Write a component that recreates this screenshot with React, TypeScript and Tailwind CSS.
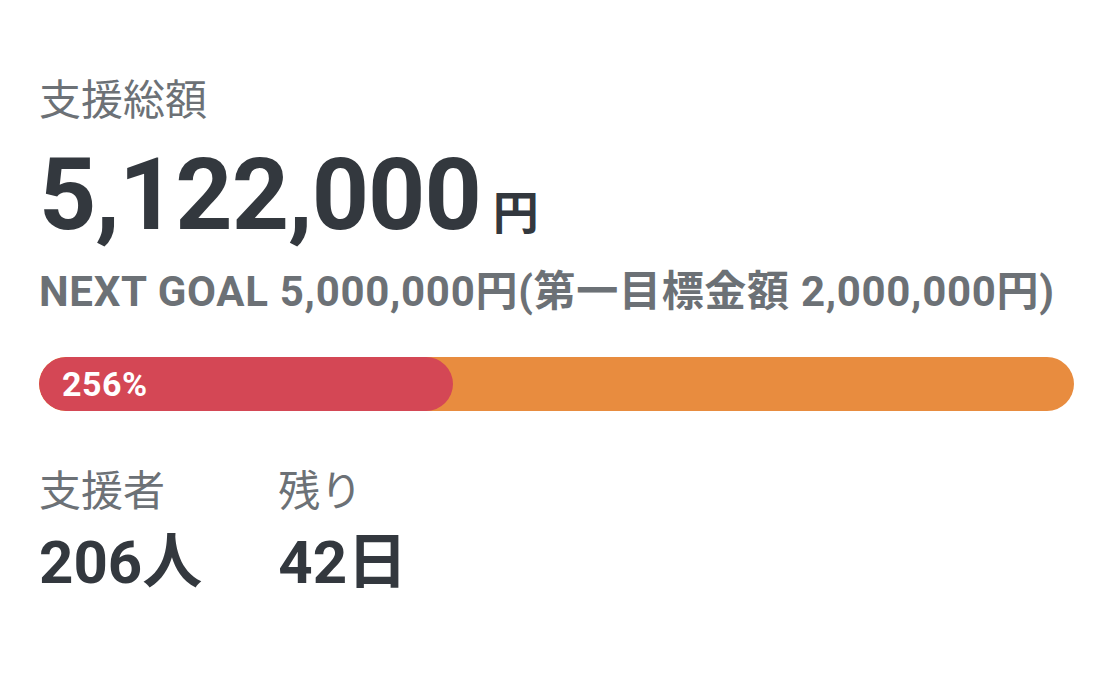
import React from "react";

const font = { fontFamily: 'Roboto, "Noto Sans CJK JP", sans-serif' };

export default function App() {
  return (
    <div className="w-[1103px] h-[675px] bg-white overflow-hidden" style={font}>
      <div className="pl-[39px] pr-[30px] pt-[80px] flex flex-col">
        <div className="text-[42px] leading-none text-[#6c7176]">支援総額</div>
        <div className="mt-[23px] flex items-baseline text-[#33383e]">
          <span className="text-[100px] leading-none font-bold tracking-[-1px]">5,122,000</span>
          <span className="ml-[12px] text-[46px] leading-none font-bold">円</span>
        </div>
        <div className="mt-[26px] text-[42px] leading-none font-bold text-[#6c7176] whitespace-nowrap tracking-[0.7px]">
          NEXT GOAL 5,000,000円(第一目標金額 2,000,000円)
        </div>
        <div className="mt-[44px] w-[1035px] h-[54px] rounded-full bg-[#e88c3f] flex overflow-hidden">
          <div className="w-[40%] h-full rounded-full bg-[#d44755] flex items-center pl-[23px]">
            <span className="text-[34px] font-bold text-white leading-none tracking-[0.5px]">256%</span>
          </div>
        </div>
        <div className="mt-[60px] flex gap-[76px]">
          <div className="flex flex-col">
            <div className="text-[42px] leading-none text-[#6c7176]">支援者</div>
            <div className="mt-[20px] text-[60px] leading-none font-bold text-[#33383e]">206人</div>
          </div>
          <div className="flex flex-col">
            <div className="text-[42px] leading-none text-[#6c7176]">残り</div>
            <div className="mt-[20px] text-[60px] leading-none font-bold text-[#33383e]">42日</div>
          </div>
        </div>
      </div>
    </div>
  );
}
